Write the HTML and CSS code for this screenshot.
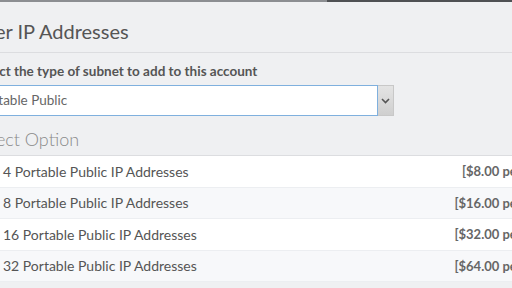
FILE: index.html
```html
<!DOCTYPE html>
<html lang="en">
<head>
    <meta charset="UTF-8">
    <meta name="viewport" content="width=device-width, initial-scale=1.0">
    <title>Order IP Addresses</title>
    <link rel="stylesheet" href="styles.css">
</head>
<body>
    <div class="modal">
        <div class="top-strip">
            <div class="strip-light"></div>
            <div class="strip-dark"></div>
        </div>
        <div class="modal-header">
            <h3>Order IP Addresses</h3>
        </div>
        <div class="modal-body">
            <label for="subnet_type">Select the type of subnet to add to this account</label>
            <div class="select-box">
                <div class="select-value" id="subnet_type">Portable Public</div>
                <div class="select-button">
                    <svg width="9" height="6" viewBox="0 0 9 6"><path d="M1 1 L4.5 4.5 L8 1" fill="none" stroke="#555" stroke-width="1.6"/></svg>
                </div>
            </div>
            <h4>Select Option</h4>
        </div>
        <table class="options">
            <tr><td class="name">4 Portable Public IP Addresses</td><td class="price">[$8.00 per month]</td></tr>
            <tr><td class="name">8 Portable Public IP Addresses</td><td class="price">[$16.00 per month]</td></tr>
            <tr><td class="name">16 Portable Public IP Addresses</td><td class="price">[$32.00 per month]</td></tr>
            <tr><td class="name">32 Portable Public IP Addresses</td><td class="price">[$64.00 per month]</td></tr>
        </table>
    </div>
</body>
</html>
```

FILE: styles.css
```css
body, html {
    margin: 0;
    padding: 0;
    height: 100%;
    overflow: hidden;
    background-color: #eff0f2;
    font-family: Lato, "Open Sans", sans-serif;
}
.modal {
    margin-left: -50px;
    width: 620px;
}
.top-strip {
    display: flex;
    height: 2px;
}
.strip-light {
    width: 377px;
    background-color: #8c8e92;
}
.strip-dark {
    flex: 1;
    background-color: #4f5154;
}
.modal-header {
    border-bottom: 1px solid #dcdde0;
    padding: 8px 0 0 11px;
    height: 42px;
    display: flex;
    align-items: center;
}
.modal-header h3 {
    margin: 0;
    font-size: 20px;
    font-weight: 400;
    color: #555;
}
.modal-body {
    padding: 10px 0 0 24px;
}
label {
    display: block;
    font-size: 13.5px;
    font-weight: 700;
    color: #555;
    margin-bottom: 6px;
}
.select-box {
    display: flex;
    width: 420px;
    height: 31px;
}
.select-value {
    flex: 1;
    background: #fff;
    border: 1px solid #7fb0de;
    padding-left: 3px;
    font-size: 13.5px;
    color: #666;
    line-height: 29px;
}
.select-button {
    width: 15px;
    border: 1px solid #c8c8c8;
    border-left: none;
    background: linear-gradient(#e4e4e4, #cfcfcf);
    display: flex;
    align-items: center;
    justify-content: center;
}
h4 {
    margin: 12px 0 0 -1px;
    font-size: 18px;
    font-weight: 300;
    color: #8a8a8a;
    height: 27px;
}
.options {
    width: 100%;
    border-collapse: collapse;
    border-top: 1px solid #dcdde0;
    border-bottom: 1px solid #dcdde0;
}
.options td {
    height: 30.5px;
    padding: 0;
    font-size: 14px;
    color: #555;
    border-bottom: 1px solid #eceef1;
}
.options tr:nth-child(odd) {
    background-color: #fff;
}
.options tr:nth-child(even) {
    background-color: #f7f8fa;
}
.options .name {
    padding-left: 53px;
}
.options .price {
    text-align: right;
    font-size: 13px;
    font-weight: 700;
    color: #666;
    padding-right: 4px;
}
```
